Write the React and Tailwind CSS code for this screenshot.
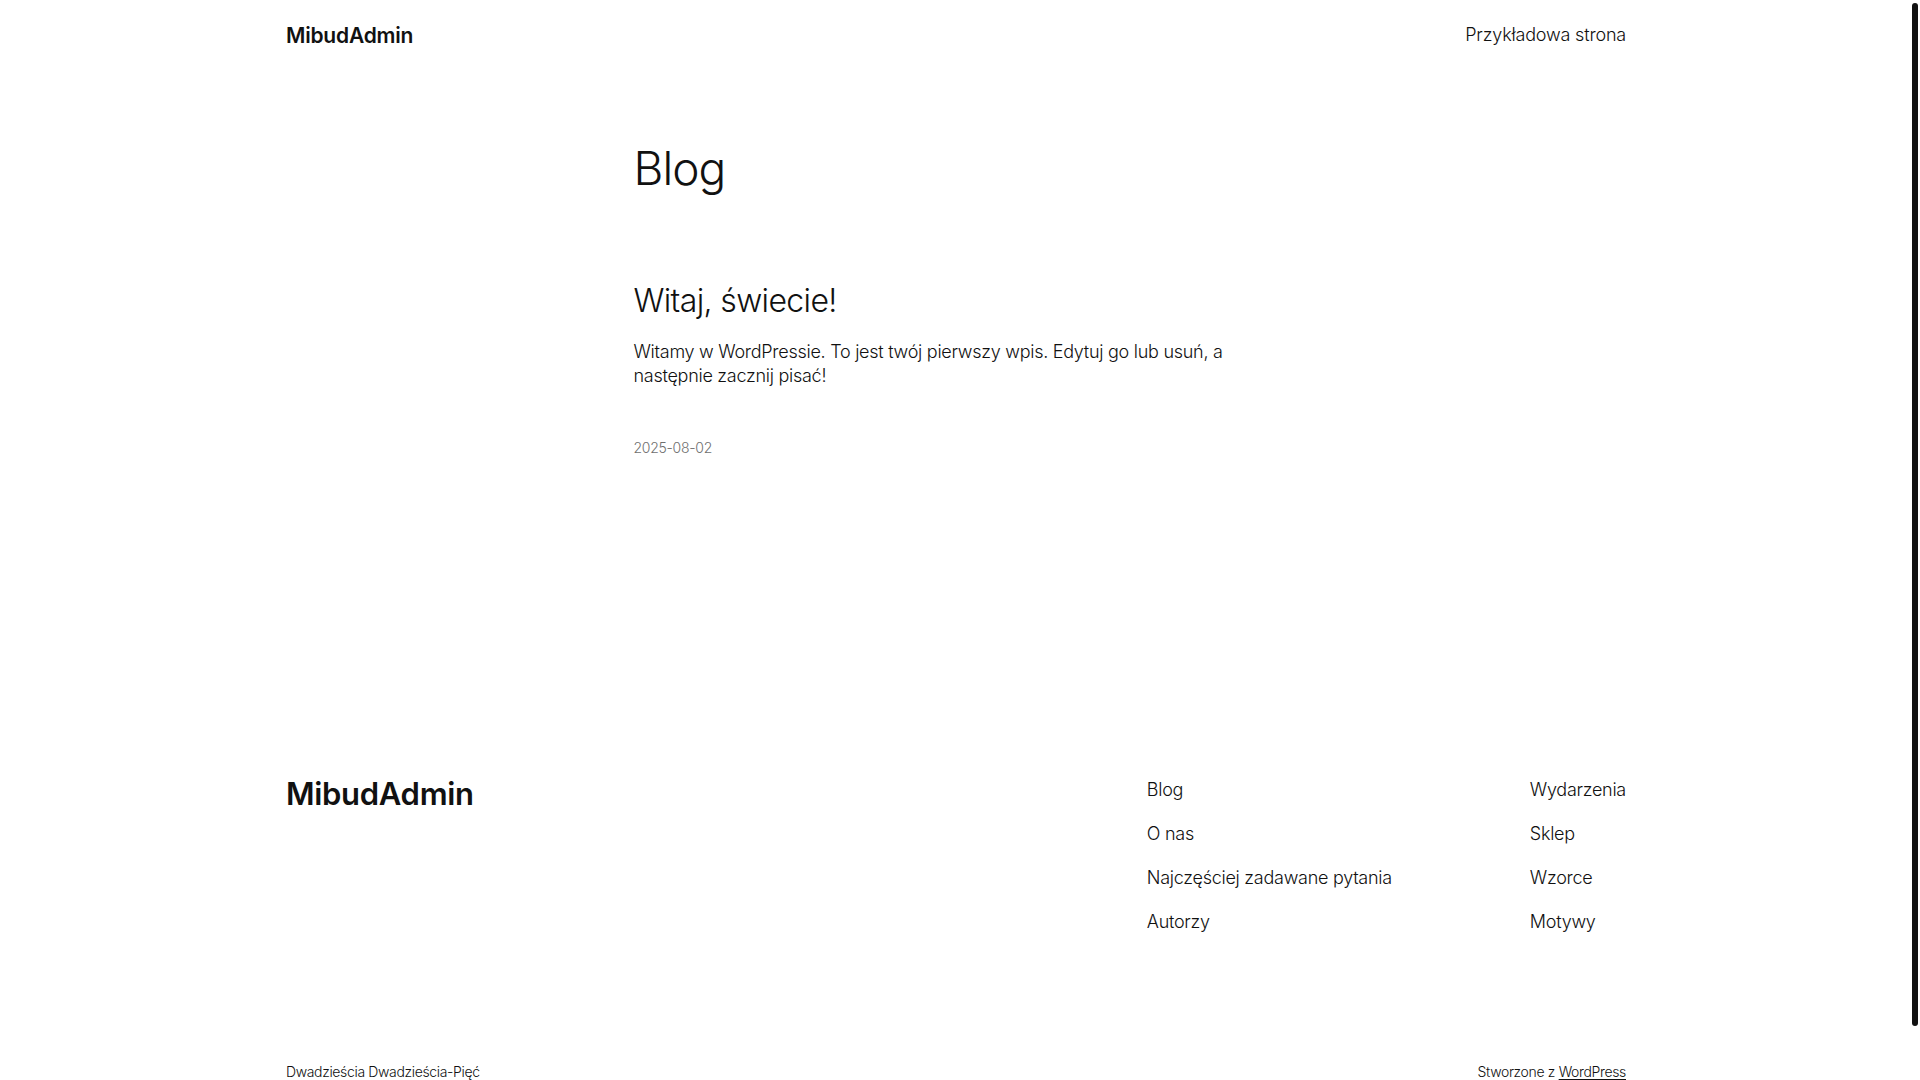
import React from "react";

// Blog index page of a block theme, footer included.
const footerNavLeft = ["Blog", "O nas", "Najczęściej zadawane pytania", "Autorzy"];
const footerNavRight = ["Wydarzenia", "Sklep", "Wzorce", "Motywy"];

const App = () => {
  return (
    <div className="flex h-[1080px] w-full overflow-hidden bg-white text-[#111111] font-['Inter','Noto_Sans',sans-serif]">
      {/* --- Page --- */}
      <div className="w-[1912px] shrink-0">
        {/* --- Header --- */}
        <header className="mx-auto flex h-[68px] w-[1340px] items-center justify-between pt-[2px]">
          <a href="#" className="text-[21px] font-semibold leading-none tracking-[-0.01em]">
            MibudAdmin
          </a>
          <a href="#" className="text-[18px] font-light leading-none tracking-[-0.01em]">
            Przykładowa strona
          </a>
        </header>

        {/* --- Main --- */}
        <main className="mx-auto w-[645px]">
          <h1 className="mt-[74px] text-[46px] font-light leading-[52px] tracking-[-0.02em]">
            Blog
          </h1>

          <article className="mt-[88px]">
            <h2 className="text-[32px] font-light leading-[38px] tracking-[-0.02em]">
              <a href="#">Witaj, świecie!</a>
            </h2>
            <p className="mt-[20px] text-[18px] font-light leading-[24px] tracking-[-0.015em]">
              Witamy w WordPressie. To jest twój pierwszy wpis. Edytuj go lub
              usuń, a następnie zacznij pisać!
            </p>
            <div className="mt-[50px] text-[14px] font-light leading-[20px] tracking-[-0.02em] text-[#6f6f6f]">
              2025-08-02
            </div>
          </article>
        </main>

        {/* --- Footer --- */}
        <footer className="mx-auto mt-[317px] w-[1340px]">
          <div className="flex items-start justify-between">
            <a href="#" className="text-[31px] font-semibold leading-[38px] tracking-[-0.01em]">
              MibudAdmin
            </a>
            <div className="flex pt-[2px]">
              <nav className="flex w-[383px] flex-col gap-[19px]">
                {footerNavLeft.map((item) => (
                  <a key={item} href="#" className="text-[18px] font-light leading-[25px] tracking-[-0.015em]">
                    {item}
                  </a>
                ))}
              </nav>
              <nav className="flex flex-col gap-[19px]">
                {footerNavRight.map((item) => (
                  <a key={item} href="#" className="text-[18px] font-light leading-[25px] tracking-[-0.015em]">
                    {item}
                  </a>
                ))}
              </nav>
            </div>
          </div>

          <div className="mt-[128px] flex items-center justify-between text-[14px] font-light leading-[20px] tracking-[-0.025em]">
            <p>Dwadzieścia Dwadzieścia-Pięć</p>
            <p>
              Stworzone z{" "}
              <a href="#" className="underline underline-offset-2">
                WordPress
              </a>
            </p>
          </div>
        </footer>
      </div>

      {/* --- Scrollbar --- */}
      <div className="w-[8px] shrink-0">
        <div className="mt-[3px] h-[1023px] w-[6px] rounded-full bg-[#111111]" />
      </div>
    </div>
  );
};

export default App;
